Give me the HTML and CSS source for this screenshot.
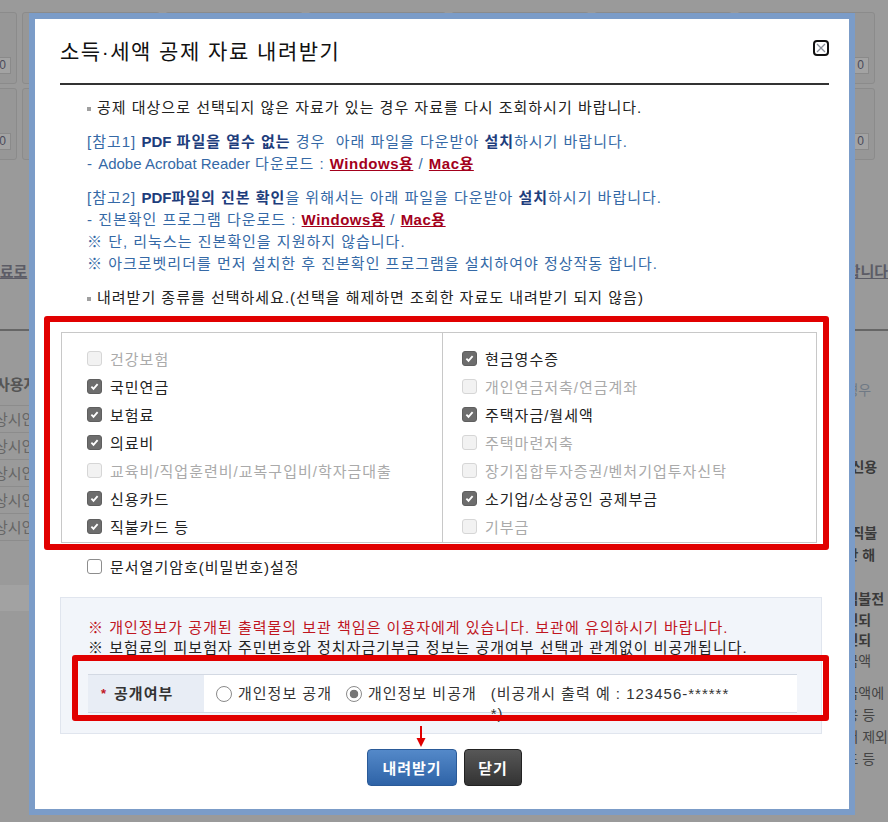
FILE: index.html
```html
<!DOCTYPE html>
<html lang="ko">
<head>
    <meta charset="UTF-8">
    <meta name="viewport" content="width=device-width, initial-scale=1.0">
    <title>소득·세액 공제 자료 내려받기</title>
    <link rel="stylesheet" href="styles.css">
</head>
<body>
    <div class="page">
        <div class="cards">
            <div class="card"><span class="card-val">0</span></div>
            <div class="card"><span class="card-val">0</span></div>
            <div class="card"><span class="card-val">0</span></div>
            <div class="card"><span class="card-val">0</span></div>
            <div class="card"><span class="card-val">0</span></div>
            <div class="card"><span class="card-val">0</span></div>
            <div class="card"><span class="card-val">0</span></div>
        </div>
        <div class="cards">
            <div class="card"><span class="card-val">0</span></div>
            <div class="card"><span class="card-val">0</span></div>
            <div class="card"><span class="card-val">0</span></div>
            <div class="card"><span class="card-val">0</span></div>
            <div class="card"><span class="card-val">0</span></div>
            <div class="card"><span class="card-val">0</span></div>
            <div class="card"><span class="card-val">0</span></div>
        </div>
        <div class="page-link">
            <a href="#">자료로</a>
            <a href="#">합니다</a>
        </div>
        <div class="page-main">
            <div class="page-left">
                <div class="page-th">사용자</div>
                <div class="page-td">상시인원</div>
                <div class="page-td">상시인원</div>
                <div class="page-td">상시인원</div>
                <div class="page-td">상시인원</div>
                <div class="page-td">상시인원</div>
                <div class="page-foot"></div>
            </div>
            <div class="page-right">
                <p class="pr-muted">경우</p>
                <p class="pr-bold pr-gap">신용</p>
                <p class="pr-bold pr-gap">직불</p>
                <p class="pr-bold">만 해</p>
                <p class="pr-bold pr-gap2">직불전</p>
                <p class="pr-bold pr-tight">인되</p>
                <p class="pr-bold pr-tight">인되</p>
                <p>금액</p>
                <p class="pr-gap3">금액에</p>
                <p>용 등</p>
                <p>서 제외</p>
                <p>드 등</p>
            </div>
        </div>
    </div>

    <div class="modal">
        <div class="modal-head">
            <h2 class="modal-title">소득·세액 공제 자료 내려받기</h2>
            <button class="close-x" type="button" aria-label="닫기">
                <svg width="16" height="16" viewBox="0 0 16 16">
                    <rect x="1" y="1" width="14" height="14" rx="3" fill="#fff" stroke="#111" stroke-width="2"/>
                    <path d="M4 4l8 8M12 4l-8 8" stroke="#8a8f9a" stroke-width="1.3"/>
                </svg>
            </button>
        </div>

        <div class="notes">
            <p class="bullet">공제 대상으로 선택되지 않은 자료가 있는 경우 자료를 다시 조회하시기 바랍니다.</p>
            <div class="ref">
                <p>[참고1] <b><span class="en">PDF</span> 파일을 열수 없는</b> 경우 &nbsp;아래 파일을 다운받아 <b>설치</b>하시기 바랍니다.</p>
                <p>- <span class="en">Adobe Acrobat Reader</span> 다운로드 : <a href="#">Windows용</a> / <a href="#">Mac용</a></p>
            </div>
            <div class="ref">
                <p>[참고2] <b><span class="en">PDF</span>파일의 진본 확인</b>을 위해서는 아래 파일을 다운받아 <b>설치</b>하시기 바랍니다.</p>
                <p>- 진본확인 프로그램 다운로드 : <a href="#">Windows용</a> / <a href="#">Mac용</a></p>
                <p>※ 단, 리눅스는 진본확인을 지원하지 않습니다.</p>
                <p>※ 아크로벳리더를 먼저 설치한 후 진본확인 프로그램을 설치하여야 정상작동 합니다.</p>
            </div>
            <p class="bullet bullet-last">내려받기 종류를 선택하세요.(선택을 해제하면 조회한 자료도 내려받기 되지 않음)</p>
        </div>

        <div class="pick">
            <div class="pick-table">
                <div class="pick-col">
                    <label class="opt off"><input type="checkbox" class="chk" disabled> 건강보험</label>
                    <label class="opt"><input type="checkbox" class="chk" checked> 국민연금</label>
                    <label class="opt"><input type="checkbox" class="chk" checked> 보험료</label>
                    <label class="opt"><input type="checkbox" class="chk" checked> 의료비</label>
                    <label class="opt off"><input type="checkbox" class="chk" disabled> 교육비/직업훈련비/교복구입비/학자금대출</label>
                    <label class="opt"><input type="checkbox" class="chk" checked> 신용카드</label>
                    <label class="opt"><input type="checkbox" class="chk" checked> 직불카드 등</label>
                </div>
                <div class="pick-col pick-col-right">
                    <label class="opt"><input type="checkbox" class="chk" checked> 현금영수증</label>
                    <label class="opt off"><input type="checkbox" class="chk" disabled> 개인연금저축/연금계좌</label>
                    <label class="opt"><input type="checkbox" class="chk" checked> 주택자금/월세액</label>
                    <label class="opt off"><input type="checkbox" class="chk" disabled> 주택마련저축</label>
                    <label class="opt off"><input type="checkbox" class="chk" disabled> 장기집합투자증권/벤처기업투자신탁</label>
                    <label class="opt"><input type="checkbox" class="chk" checked> 소기업/소상공인 공제부금</label>
                    <label class="opt off"><input type="checkbox" class="chk" disabled> 기부금</label>
                </div>
            </div>
        </div>

        <label class="opt pw-opt"><input type="checkbox" class="chk"> 문서열기암호(비밀번호)설정</label>

        <div class="privacy">
            <p class="privacy-warn">※ 개인정보가 공개된 출력물의 보관 책임은 이용자에게 있습니다. 보관에 유의하시기 바랍니다.</p>
            <p>※ 보험료의 피보험자 주민번호와 정치자금기부금 정보는 공개여부 선택과 관계없이 비공개됩니다.</p>
            <div class="open-row">
                <div class="open-label"><span class="req">*</span>공개여부</div>
                <div class="open-value">
                    <label class="radio"><input type="radio" name="open" class="rad"> 개인정보 공개</label>
                    <label class="radio"><input type="radio" name="open" class="rad" checked> 개인정보 비공개</label>
                    <span class="open-hint">(비공개시 출력 예 : 123456-******<br>*)</span>
                </div>
                <div class="mark"></div>
            </div>
        </div>

        <div class="actions">
            <div class="btn-wrap">
                <button class="btn btn-blue" type="button">내려받기</button>
                <svg class="arrow" width="10" height="22" viewBox="0 0 10 22">
                    <path d="M5 0v14" stroke="#e10000" stroke-width="2"/>
                    <path d="M0.5 12h9L5 21z" fill="#e10000"/>
                </svg>
            </div>
            <button class="btn btn-dark" type="button">닫기</button>
        </div>
    </div>
</body>
</html>
```

FILE: styles.css
```css
* {
    box-sizing: border-box;
}
body {
    margin: 0;
    height: 822px;
    overflow: hidden;
    background-color: #9a9a9a;
    font-family: "Liberation Sans", "Noto Sans CJK KR", sans-serif;
    font-size: 15px;
    color: #222;
}
p {
    margin: 0;
}

/* dimmed page behind the dialog */
.page {
    padding-top: 12px;
    color: #555;
}
.cards {
    display: grid;
    grid-template-columns: repeat(7, 138px);
    gap: 5px;
    margin-left: -121px;
    margin-bottom: 4px;
}
.card {
    height: 72px;
    border: 1px solid #8b8b8b;
    border-radius: 3px;
    background-color: #979797;
    display: flex;
    align-items: flex-end;
    justify-content: flex-end;
    padding: 0 5px 9px 0;
}
.card-val {
    width: 42px;
    height: 17px;
    border: 1px solid #8a8a8a;
    background-color: #a3a3a3;
    font-size: 12px;
    line-height: 15px;
    text-align: right;
    padding-right: 4px;
    color: #4a4a5a;
}
.page-link {
    display: flex;
    justify-content: space-between;
    margin: 100px 0 0 -14px;
    font-weight: bold;
}
.page-link a {
    color: #5c5c66;
    text-decoration: underline;
}
.page-main {
    display: flex;
    margin-top: 48px;
    border-top: 2px solid #666;
}
.page-left {
    width: 855px;
    padding-top: 42px;
}
.page-th {
    height: 33px;
    margin-left: -4px;
    font-weight: bold;
    color: #555;
    border-bottom: 1px solid #8c8c8c;
}
.page-td {
    height: 27px;
    line-height: 27px;
    margin-left: -6px;
    color: #666;
    border-bottom: 1px solid #8c8c8c;
}
.page-foot {
    height: 26px;
    margin-top: 44px;
    background-color: #a2a2a2;
}
.page-right {
    flex: 1;
    padding: 48px 0 0 4px;
    font-size: 14px;
    line-height: 22px;
    color: #444;
    white-space: nowrap;
}
.pr-muted {
    color: #6f7985;
}
.pr-bold {
    font-weight: bold;
    color: #3a3a3a;
}
.pr-gap {
    margin-top: 55px;
    padding-left: 6px;
}
.pr-gap + .pr-gap {
    margin-top: 44px;
}
.pr-gap2 {
    margin-top: 22px;
}
.pr-tight {
    line-height: 20px;
}
.pr-gap3 {
    margin-top: 10px;
}

/* dialog */
.modal {
    position: fixed;
    left: 29px;
    top: 13px;
    width: 826px;
    height: 802px;
    border: 6px solid #7b9cc8;
    background-color: #fff;
    padding: 0 20px 0 25px;
    letter-spacing: 1px;
}
.modal-head {
    display: flex;
    justify-content: space-between;
    align-items: flex-start;
    padding: 18px 0 16px;
    border-bottom: 2px solid #333;
}
.modal-title {
    margin: 0;
    font-size: 21px;
    line-height: 30px;
    font-weight: normal;
    letter-spacing: 1.5px;
    color: #111;
}
.close-x {
    margin-top: 3px;
    padding: 0;
    border: none;
    background: none;
    width: 16px;
    height: 16px;
    cursor: pointer;
}
.close-x svg {
    display: block;
}
.notes {
    padding: 12px 0 0 27px;
    line-height: 22px;
}
.en {
    letter-spacing: 0;
}
.bullet {
    position: relative;
    padding-left: 10px;
    color: #222;
}
.bullet::before {
    content: "";
    position: absolute;
    left: 0;
    top: 10px;
    width: 4px;
    height: 4px;
    background-color: #a0a0a0;
}
.bullet-last {
    margin-top: 12px;
}
.ref {
    margin-top: 12px;
    color: #3569a6;
}
.ref b {
    color: #1d3d7c;
}
.ref a {
    color: #a3001b;
    font-weight: bold;
    letter-spacing: 0.5px;
    text-decoration: underline;
}

.pick {
    margin: 7px 0 0 -16px;
    border: 6px solid #e10000;
    border-radius: 3px;
    padding: 10px 6px 1px 11px;
}
.pick-table {
    display: grid;
    grid-template-columns: 380px 1fr;
    border: 1px solid #c8c8c8;
}
.pick-col {
    padding: 11px 0 2px 25px;
}
.pick-col-right {
    border-left: 1px solid #c8c8c8;
    padding-left: 19px;
}
.opt {
    display: flex;
    align-items: center;
    gap: 8px;
    height: 28px;
    color: #222;
}
.opt.off {
    color: #aaa;
}
.chk {
    appearance: none;
    -webkit-appearance: none;
    flex: none;
    width: 15px;
    height: 15px;
    margin: 0;
    border: 1px solid #8d8d8d;
    border-radius: 3px;
    background-color: #fff;
}
.chk:checked {
    border-color: #5f5f5f;
    background: #6d6d6d url("data:image/svg+xml;utf8,<svg xmlns='http://www.w3.org/2000/svg' viewBox='0 0 12 12'><path d='M2.6 6.2l2.3 2.4 4.5-5.1' fill='none' stroke='white' stroke-width='2'/></svg>") center / 11px no-repeat;
}
.chk:disabled {
    border-color: #d6d6d6;
    background-color: #f2f2f2;
}
.pw-opt {
    height: 22px;
    margin: 5px 0 0 27px;
}

.privacy {
    margin: 20px 7px 0 0;
    padding: 20px 24px 20px 27px;
    background-color: #f2f5fa;
    border: 1px solid #e0e5ee;
    line-height: 20px;
    color: #222;
}
.privacy-warn {
    color: #c0161f;
}
.open-row {
    position: relative;
    display: flex;
    height: 39px;
    margin-top: 16px;
    border-top: 1px solid #d3d9e3;
    border-bottom: 1px solid #d3d9e3;
}
.open-label {
    width: 116px;
    display: flex;
    align-items: center;
    padding-left: 13px;
    background-color: #e8edf5;
    font-weight: bold;
    color: #333;
}
.req {
    color: #c0161f;
    font-size: 13px;
    margin-right: 7px;
}
.open-value {
    flex: 1;
    display: flex;
    align-items: flex-start;
    gap: 14px;
    padding: 9px 0 0 12px;
    background-color: #fff;
    color: #333;
}
.radio {
    display: flex;
    align-items: center;
    gap: 6px;
}
.rad {
    appearance: none;
    -webkit-appearance: none;
    width: 16px;
    height: 16px;
    margin: 0;
    border: 1px solid #8a8a8a;
    border-radius: 50%;
    background: #fff;
}
.rad:checked {
    background: radial-gradient(circle, #777 0 4px, #fff 4.6px);
}
.open-hint {
    display: inline-block;
    line-height: 20px;
}
.mark {
    position: absolute;
    top: -20px;
    left: -16px;
    right: -32px;
    bottom: -9px;
    border: 6px solid #e10000;
    border-radius: 3px;
    pointer-events: none;
}

.actions {
    display: flex;
    justify-content: center;
    gap: 7px;
    margin-top: 15px;
}
.btn-wrap {
    position: relative;
}
.btn {
    height: 37px;
    border-radius: 4px;
    border: 1px solid;
    color: #fff;
    font-family: inherit;
    font-size: 15px;
    font-weight: bold;
    letter-spacing: 1px;
    cursor: pointer;
}
.btn-blue {
    width: 90px;
    background: linear-gradient(#5489c9, #2e63a7);
    border-color: #2a5a98;
}
.btn-dark {
    width: 58px;
    background: linear-gradient(#575757, #333);
    border-color: #222;
}
.arrow {
    position: absolute;
    left: 49px;
    top: -23px;
}
```
